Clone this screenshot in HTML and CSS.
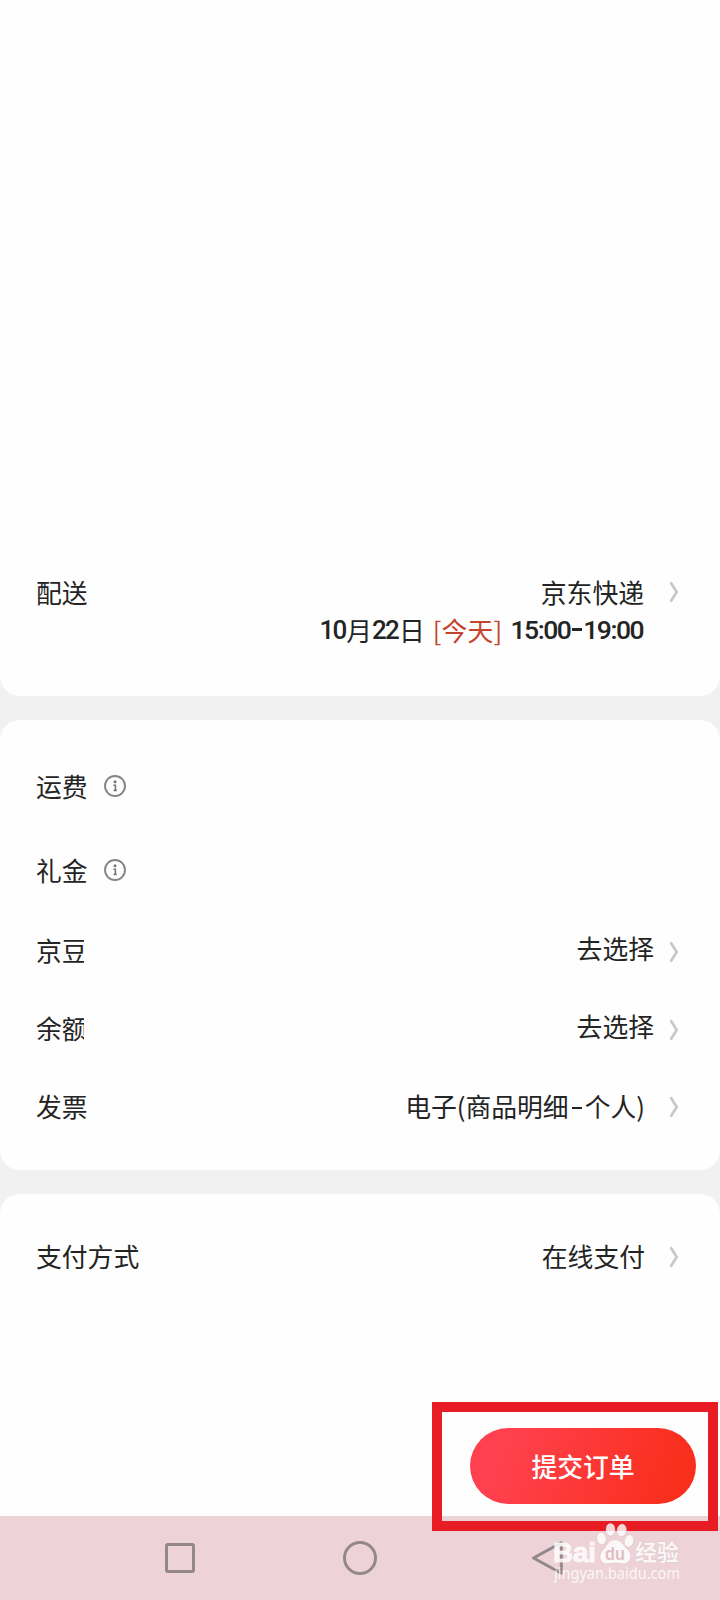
FILE: index.html
```html
<!DOCTYPE html>
<html lang="zh-CN">
<head>
<meta charset="utf-8">
<title>提交订单</title>
<link rel="stylesheet" href="styles.css">
</head>
<body>
<svg width="0" height="0" class="defs">
  <symbol id="chevron" viewBox="0 0 12 24"><path d="M3.2 3.3 L8.7 12 L3.2 20.7" fill="none" stroke="#c9c9c9" stroke-width="2.8" stroke-linecap="round"/></symbol>
  <symbol id="info" viewBox="0 0 24 24"><circle cx="12" cy="12" r="10" fill="none" stroke="#858585" stroke-width="1.9"/><circle cx="12" cy="7.7" r="1.5" fill="#777"/><path d="M10.4 11.2h2v5.4M10.6 16.4h3.2" fill="none" stroke="#777" stroke-width="1.6"/></symbol>
</svg>
<main class="page">
  <section class="card card-delivery">
    <div class="row row-delivery">
      <span class="label">配送</span>
      <span class="value">京东快递</span>
      <svg class="chevron"><use href="#chevron"/></svg>
    </div>
    <div class="schedule"><b>10</b>月<b>22</b>日<span class="today">[今天]</span><b class="time">15:00</b><i class="dash"></i><b class="time">19:00</b></div>
  </section>
  <section class="card card-fees">
    <div class="row row-tall"><span class="label">运费</span><svg class="info"><use href="#info"/></svg></div>
    <div class="row row-tall"><span class="label">礼金</span><svg class="info"><use href="#info"/></svg></div>
    <div class="row"><span class="label label-clipped">京豆</span><span class="value value-choose">去选择</span><svg class="chevron chevron-low"><use href="#chevron"/></svg></div>
    <div class="row"><span class="label label-clipped">余额</span><span class="value value-choose">去选择</span><svg class="chevron chevron-low"><use href="#chevron"/></svg></div>
    <div class="row"><span class="label">发票</span><span class="value">电子(商品明细<i class="dash dash-light"></i>个人)</span><svg class="chevron"><use href="#chevron"/></svg></div>
  </section>
  <section class="card card-payment">
    <div class="row"><span class="label">支付方式</span><span class="value">在线支付</span><svg class="chevron"><use href="#chevron"/></svg></div>
    <div class="actions"><button class="submit">提交订单</button></div>
  </section>
  <nav class="navbar">
    <svg class="nav-icon" viewBox="0 0 36 36"><rect x="4.5" y="4.5" width="27" height="27" rx="1.5"/></svg>
    <svg class="nav-icon" viewBox="0 0 36 36"><circle cx="18" cy="18" r="15.5"/></svg>
    <svg class="nav-icon" viewBox="0 0 36 36"><path d="M31.3 2.8V33.2L3.5 18Z" stroke-linejoin="round"/></svg>
  </nav>
  <div class="highlight"></div>
  <svg class="watermark" viewBox="0 0 140 70">
    <g class="wm-mark">
      <text class="wm-bold wm-heavy" x="5" y="42" font-size="28" textLength="43" lengthAdjust="spacingAndGlyphs">Bai</text>
      <ellipse cx="53.5" cy="18.5" rx="4.4" ry="5.8" transform="rotate(-12 53.5 18.5)"/>
      <ellipse cx="62.5" cy="9.7" rx="4.4" ry="6.2"/>
      <ellipse cx="73.7" cy="10.3" rx="4.5" ry="6" transform="rotate(8 73.7 10.3)"/>
      <ellipse cx="81" cy="21" rx="4.4" ry="6" transform="rotate(14 81 21)"/>
      <path d="M67 20C74 20 76 27 80 30C85 36 82 44 75 43.5C70 42.5 64 42.5 59 43.5C52 44 50 36 55 30C59 27 60 20 67 20Z"/>
      <text class="wm-cjk" x="87" y="40" font-size="22" textLength="44" lengthAdjust="spacingAndGlyphs">经验</text>
    </g>
    <text class="wm-url" x="6" y="59" font-size="15.5" textLength="126" lengthAdjust="spacingAndGlyphs">jingyan.baidu.com</text>
    <text class="wm-bold" x="57" y="40" font-size="19" textLength="20" lengthAdjust="spacingAndGlyphs" fill="#dfbfc6">du</text>
  </svg>
</main>
</body>
</html>
```
FILE: styles.css
```css
* { box-sizing: border-box; }
body {
  margin: 0;
  background: #f1f1f1;
  color: #242424;
  font: 400 25.8px/38px "Noto Sans CJK SC", sans-serif;
}
.defs { position: absolute; }
.page {
  position: relative;
  width: 720px;
  height: 1600px;
  display: flex;
  flex-direction: column;
  overflow: hidden;
}
.card {
  background: #fefefe;
  border-radius: 20px;
  padding: 0 40px 0 36px;
  margin-bottom: 24px;
  flex: none;
}
.card-delivery { height: 696px; padding-top: 553px; border-radius: 0 0 20px 20px; }
.card-fees { height: 450px; padding-top: 24px; }
.card-payment {
  height: 322px;
  padding-top: 24px;
  margin: 0;
  border-radius: 20px 20px 0 0;
}
.row { display: flex; align-items: center; height: 78px; }
.row-tall { height: 84px; }
.label { white-space: nowrap; margin-top: -2px; }
.row-tall .label { margin-top: 0; }
.value { margin: -2px 23px 0 auto; white-space: nowrap; }
.card-delivery .label { margin-top: 0; }
.card-delivery .value { margin: 0 24px 0 auto; }
.label-clipped { width: 48px; overflow: hidden; }
.value-choose { margin: -7px 14px 0 auto; }
.chevron { width: 12px; height: 24px; flex: none; }
.chevron-low { margin-top: 2px; }
.info { width: 24px; height: 24px; margin-left: 15.4px; }
.schedule {
  display: flex;
  justify-content: flex-end;
  align-items: center;
  margin: -21px 36px 0 0;
  white-space: nowrap;
}
.schedule b { font: 500 26px/38px Roboto, sans-serif; letter-spacing: -1.9px; padding: 1px 1px 0 0; }
.schedule .time { font-size: 26.5px; letter-spacing: -1.5px; }
.today { color: #c6442c; margin: 0 8px; letter-spacing: .2px; }
.dash { display: inline-block; width: 10px; height: 3px; background: #242424; margin: 0 1px; }
.dash-light { height: 2px; width: 10px; margin: 0 3px; vertical-align: 8px; }
.actions { display: flex; justify-content: flex-end; margin-top: 132px; margin-right: -16px; }
.submit {
  width: 226px;
  height: 76px;
  border: 0;
  border-radius: 38px;
  padding: 0;
  background: linear-gradient(110deg, #ff414f 15%, #f92e1b 90%);
  color: #fff;
  font: 500 25.8px/38px "Noto Sans CJK SC", sans-serif;
}
.navbar {
  flex: none;
  height: 84px;
  background: #edd3d8;
  display: flex;
  gap: 144px;
  padding: 24px 0 0 162px;
}
.nav-icon { width: 36px; height: 36px; fill: none; stroke: #938789; stroke-width: 3; }
.nav-icon:last-child { margin-left: 8px; }
.highlight {
  position: absolute;
  left: 432px;
  top: 1402px;
  width: 286px;
  height: 129px;
  border: 10px solid #e81c25;
}
.watermark { position: absolute; left: 548px; top: 1520px; width: 140px; height: 70px; }
.wm-mark {
  fill: #fff;
  fill-opacity: .82;
  stroke: #d5bfc4;
  stroke-opacity: .5;
  stroke-width: 1.2;
  paint-order: stroke;
}
.wm-bold { font-family: "Liberation Sans", sans-serif; font-weight: 700; }
.wm-heavy { stroke: #fff; stroke-opacity: .6; }
.wm-cjk { font-family: "Noto Sans CJK SC", sans-serif; font-weight: 700; }
.wm-url { font-family: "Noto Sans", sans-serif; fill: #fff; fill-opacity: .82; }
```
